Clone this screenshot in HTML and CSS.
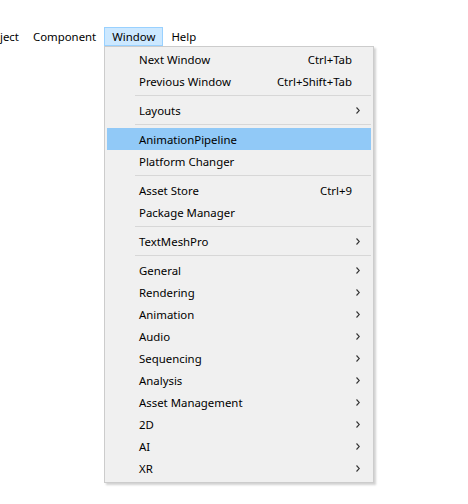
FILE: index.html
```html
<!DOCTYPE html>
<html>
<head>
<meta charset="utf-8">
<link rel="stylesheet" href="styles.css">
</head>
<body>
<div class="menubar">
  <span class="mb-item first">ject</span>
  <span class="mb-item">Component</span>
  <span class="mb-item active">Window</span>
  <span class="mb-item">Help</span>
</div>
<div class="menu">
  <div class="row"><span class="label">Next Window</span><span class="sc">Ctrl+Tab</span></div>
  <div class="row"><span class="label">Previous Window</span><span class="sc">Ctrl+Shift+Tab</span></div>
  <div class="sep"></div>
  <div class="row"><span class="label">Layouts</span><svg class="arr" width="4" height="7" viewBox="0 0 4 7"><path d="M0.5 0.5 L3.3 3.5 L0.5 6.5" fill="none" stroke="#333" stroke-width="1.1"/></svg></div>
  <div class="sep"></div>
  <div class="row hl"><span class="label">AnimationPipeline</span></div>
  <div class="row"><span class="label">Platform Changer</span></div>
  <div class="sep"></div>
  <div class="row"><span class="label">Asset Store</span><span class="sc">Ctrl+9</span></div>
  <div class="row"><span class="label">Package Manager</span></div>
  <div class="sep"></div>
  <div class="row"><span class="label">TextMeshPro</span><svg class="arr" width="4" height="7" viewBox="0 0 4 7"><path d="M0.5 0.5 L3.3 3.5 L0.5 6.5" fill="none" stroke="#333" stroke-width="1.1"/></svg></div>
  <div class="sep"></div>
  <div class="row"><span class="label">General</span><svg class="arr" width="4" height="7" viewBox="0 0 4 7"><path d="M0.5 0.5 L3.3 3.5 L0.5 6.5" fill="none" stroke="#333" stroke-width="1.1"/></svg></div>
  <div class="row"><span class="label">Rendering</span><svg class="arr" width="4" height="7" viewBox="0 0 4 7"><path d="M0.5 0.5 L3.3 3.5 L0.5 6.5" fill="none" stroke="#333" stroke-width="1.1"/></svg></div>
  <div class="row"><span class="label">Animation</span><svg class="arr" width="4" height="7" viewBox="0 0 4 7"><path d="M0.5 0.5 L3.3 3.5 L0.5 6.5" fill="none" stroke="#333" stroke-width="1.1"/></svg></div>
  <div class="row"><span class="label">Audio</span><svg class="arr" width="4" height="7" viewBox="0 0 4 7"><path d="M0.5 0.5 L3.3 3.5 L0.5 6.5" fill="none" stroke="#333" stroke-width="1.1"/></svg></div>
  <div class="row"><span class="label">Sequencing</span><svg class="arr" width="4" height="7" viewBox="0 0 4 7"><path d="M0.5 0.5 L3.3 3.5 L0.5 6.5" fill="none" stroke="#333" stroke-width="1.1"/></svg></div>
  <div class="row"><span class="label">Analysis</span><svg class="arr" width="4" height="7" viewBox="0 0 4 7"><path d="M0.5 0.5 L3.3 3.5 L0.5 6.5" fill="none" stroke="#333" stroke-width="1.1"/></svg></div>
  <div class="row"><span class="label">Asset Management</span><svg class="arr" width="4" height="7" viewBox="0 0 4 7"><path d="M0.5 0.5 L3.3 3.5 L0.5 6.5" fill="none" stroke="#333" stroke-width="1.1"/></svg></div>
  <div class="row"><span class="label">2D</span><svg class="arr" width="4" height="7" viewBox="0 0 4 7"><path d="M0.5 0.5 L3.3 3.5 L0.5 6.5" fill="none" stroke="#333" stroke-width="1.1"/></svg></div>
  <div class="row"><span class="label">AI</span><svg class="arr" width="4" height="7" viewBox="0 0 4 7"><path d="M0.5 0.5 L3.3 3.5 L0.5 6.5" fill="none" stroke="#333" stroke-width="1.1"/></svg></div>
  <div class="row"><span class="label">XR</span><svg class="arr" width="4" height="7" viewBox="0 0 4 7"><path d="M0.5 0.5 L3.3 3.5 L0.5 6.5" fill="none" stroke="#333" stroke-width="1.1"/></svg></div>
</div>
</body>
</html>
```
FILE: styles.css
```css
html, body {
  margin: 0;
  padding: 0;
  background: #ffffff;
}
body {
  font-family: "Noto Sans", "Open Sans", sans-serif;
  font-size: 11.4px;
  color: #000;
  width: 468px;
  height: 504px;
  overflow: hidden;
}
.menubar {
  display: flex;
  margin-top: 27px;
  height: 19px;
}
.mb-item {
  display: flex;
  align-items: center;
  height: 17px;
  padding: 0 7px;
  border: 1px solid transparent;
  white-space: nowrap;
}
.mb-item.first {
  padding-left: 0;
  padding-right: 5px;
  margin-left: -1px;
}
.mb-item.active {
  background: #cce8ff;
  border-color: #99d1ff;
}
.menu {
  margin-left: 104px;
  width: 264px;
  background: #f0f0f0;
  border: 1px solid #cccccc;
  padding: 1px 2px 3px 2px;
  box-shadow: 2px 2px 2px rgba(0, 0, 0, 0.18);
}
.row {
  display: flex;
  align-items: center;
  height: 22px;
  padding-left: 32px;
  padding-right: 19px;
  white-space: nowrap;
}
.row .label {
  flex: 1;
}
.row .arr {
  margin-right: -8px;
}
.row.hl {
  background: #91c9f7;
}
.sep {
  height: 1px;
  background: #d7d7d7;
  margin: 3px 0 3px 28px;
}
```
